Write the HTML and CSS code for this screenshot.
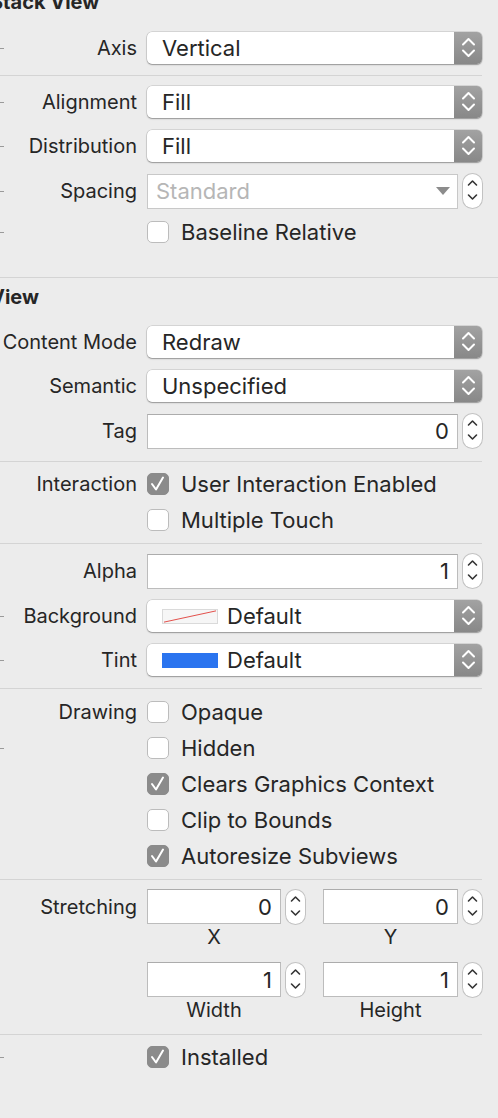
FILE: index.html
```html
<!DOCTYPE html>
<html lang="en">
<head>
    <meta charset="UTF-8">
    <meta name="viewport" content="width=device-width, initial-scale=1.0">
    <title>Attributes Inspector</title>
    <link rel="stylesheet" href="styles.css">
</head>
<body>
    <div class="inspector">
        <!-- Stack View -->
        <h2 class="group-title first">Stack View</h2>

        <div class="row row-popup">
            <span class="label mark">Axis</span>
            <div class="popup">
                <span class="popup-value">Vertical</span>
                <span class="popup-arrows"><svg width="28" height="32" viewBox="0 0 28 32"><path d="M9 12.5 L14.5 7 L20 12.5 M9 18.5 L14.5 24 L20 18.5" fill="none" stroke="#fff" stroke-width="2" stroke-linecap="round" stroke-linejoin="round"/></svg></span>
            </div>
        </div>

        <hr class="sep sep-a">

        <div class="row row-popup">
            <span class="label mark">Alignment</span>
            <div class="popup">
                <span class="popup-value">Fill</span>
                <span class="popup-arrows"><svg width="28" height="32" viewBox="0 0 28 32"><path d="M9 12.5 L14.5 7 L20 12.5 M9 18.5 L14.5 24 L20 18.5" fill="none" stroke="#fff" stroke-width="2" stroke-linecap="round" stroke-linejoin="round"/></svg></span>
            </div>
        </div>

        <div class="row row-popup">
            <span class="label mark">Distribution</span>
            <div class="popup">
                <span class="popup-value">Fill</span>
                <span class="popup-arrows"><svg width="28" height="32" viewBox="0 0 28 32"><path d="M9 12.5 L14.5 7 L20 12.5 M9 18.5 L14.5 24 L20 18.5" fill="none" stroke="#fff" stroke-width="2" stroke-linecap="round" stroke-linejoin="round"/></svg></span>
            </div>
        </div>

        <div class="row row-field">
            <span class="label mark">Spacing</span>
            <div class="field-pair">
                <div class="combo">
                    <span class="placeholder">Standard</span>
                    <svg width="14" height="8" viewBox="0 0 14 8"><path d="M0 0 H14 L7 8 Z" fill="#8c8c8c"/></svg>
                </div>
                <span class="stepper"><svg width="19" height="34" viewBox="0 0 19 34"><path d="M5.5 12 L9.5 8 L13.5 12 M5.5 22 L9.5 26 L13.5 22" fill="none" stroke="#333" stroke-width="1.6" stroke-linecap="round" stroke-linejoin="round"/></svg></span>
            </div>
        </div>

        <div class="row row-check">
            <span class="label mark"></span>
            <label class="check"><span class="box"></span>Baseline Relative</label>
        </div>

        <hr class="sep sep-full">

        <!-- View -->
        <h2 class="group-title">View</h2>

        <div class="row row-popup">
            <span class="label">Content Mode</span>
            <div class="popup">
                <span class="popup-value">Redraw</span>
                <span class="popup-arrows"><svg width="28" height="32" viewBox="0 0 28 32"><path d="M9 12.5 L14.5 7 L20 12.5 M9 18.5 L14.5 24 L20 18.5" fill="none" stroke="#fff" stroke-width="2" stroke-linecap="round" stroke-linejoin="round"/></svg></span>
            </div>
        </div>

        <div class="row row-popup">
            <span class="label">Semantic</span>
            <div class="popup">
                <span class="popup-value">Unspecified</span>
                <span class="popup-arrows"><svg width="28" height="32" viewBox="0 0 28 32"><path d="M9 12.5 L14.5 7 L20 12.5 M9 18.5 L14.5 24 L20 18.5" fill="none" stroke="#fff" stroke-width="2" stroke-linecap="round" stroke-linejoin="round"/></svg></span>
            </div>
        </div>

        <div class="row row-field">
            <span class="label">Tag</span>
            <div class="field-pair">
                <span class="field">0</span>
                <span class="stepper"><svg width="19" height="34" viewBox="0 0 19 34"><path d="M5.5 12 L9.5 8 L13.5 12 M5.5 22 L9.5 26 L13.5 22" fill="none" stroke="#333" stroke-width="1.6" stroke-linecap="round" stroke-linejoin="round"/></svg></span>
            </div>
        </div>

        <hr class="sep sep-b">

        <div class="row row-check">
            <span class="label">Interaction</span>
            <label class="check on"><span class="box"><svg width="22" height="22" viewBox="0 0 22 22"><path d="M5 11 L9 16.5 L16 4.5" fill="none" stroke="#fff" stroke-width="2" stroke-linecap="round" stroke-linejoin="round"/></svg></span>User Interaction Enabled</label>
        </div>

        <div class="row row-check">
            <span class="label"></span>
            <label class="check"><span class="box"></span>Multiple Touch</label>
        </div>

        <hr class="sep sep-c">

        <div class="row row-field">
            <span class="label">Alpha</span>
            <div class="field-pair">
                <span class="field">1</span>
                <span class="stepper"><svg width="19" height="34" viewBox="0 0 19 34"><path d="M5.5 12 L9.5 8 L13.5 12 M5.5 22 L9.5 26 L13.5 22" fill="none" stroke="#333" stroke-width="1.6" stroke-linecap="round" stroke-linejoin="round"/></svg></span>
            </div>
        </div>

        <div class="row row-popup">
            <span class="label mark">Background</span>
            <div class="popup">
                <span class="popup-value"><span class="swatch swatch-clear"><svg width="56" height="15" viewBox="0 0 56 15" preserveAspectRatio="none"><path d="M1 14 L55 1" stroke="#e0413b" stroke-width="1"/></svg></span>Default</span>
                <span class="popup-arrows"><svg width="28" height="32" viewBox="0 0 28 32"><path d="M9 12.5 L14.5 7 L20 12.5 M9 18.5 L14.5 24 L20 18.5" fill="none" stroke="#fff" stroke-width="2" stroke-linecap="round" stroke-linejoin="round"/></svg></span>
            </div>
        </div>

        <div class="row row-popup">
            <span class="label mark">Tint</span>
            <div class="popup">
                <span class="popup-value"><span class="swatch swatch-blue"></span>Default</span>
                <span class="popup-arrows"><svg width="28" height="32" viewBox="0 0 28 32"><path d="M9 12.5 L14.5 7 L20 12.5 M9 18.5 L14.5 24 L20 18.5" fill="none" stroke="#fff" stroke-width="2" stroke-linecap="round" stroke-linejoin="round"/></svg></span>
            </div>
        </div>

        <hr class="sep sep-d">

        <div class="row row-check">
            <span class="label">Drawing</span>
            <label class="check"><span class="box"></span>Opaque</label>
        </div>
        <div class="row row-check">
            <span class="label mark"></span>
            <label class="check"><span class="box"></span>Hidden</label>
        </div>
        <div class="row row-check">
            <span class="label"></span>
            <label class="check on"><span class="box"><svg width="22" height="22" viewBox="0 0 22 22"><path d="M5 11 L9 16.5 L16 4.5" fill="none" stroke="#fff" stroke-width="2" stroke-linecap="round" stroke-linejoin="round"/></svg></span>Clears Graphics Context</label>
        </div>
        <div class="row row-check">
            <span class="label"></span>
            <label class="check"><span class="box"></span>Clip to Bounds</label>
        </div>
        <div class="row row-check">
            <span class="label"></span>
            <label class="check on"><span class="box"><svg width="22" height="22" viewBox="0 0 22 22"><path d="M5 11 L9 16.5 L16 4.5" fill="none" stroke="#fff" stroke-width="2" stroke-linecap="round" stroke-linejoin="round"/></svg></span>Autoresize Subviews</label>
        </div>

        <hr class="sep sep-e">

        <div class="row row-stretch">
            <span class="label">Stretching</span>
            <div class="stretch-grid">
                <div class="num">
                    <div class="field-pair">
                        <span class="field">0</span>
                        <span class="stepper"><svg width="19" height="34" viewBox="0 0 19 34"><path d="M5.5 12 L9.5 8 L13.5 12 M5.5 22 L9.5 26 L13.5 22" fill="none" stroke="#333" stroke-width="1.6" stroke-linecap="round" stroke-linejoin="round"/></svg></span>
                    </div>
                    <span class="caption">X</span>
                </div>
                <div class="num">
                    <div class="field-pair">
                        <span class="field">0</span>
                        <span class="stepper"><svg width="19" height="34" viewBox="0 0 19 34"><path d="M5.5 12 L9.5 8 L13.5 12 M5.5 22 L9.5 26 L13.5 22" fill="none" stroke="#333" stroke-width="1.6" stroke-linecap="round" stroke-linejoin="round"/></svg></span>
                    </div>
                    <span class="caption">Y</span>
                </div>
                <div class="num">
                    <div class="field-pair">
                        <span class="field">1</span>
                        <span class="stepper"><svg width="19" height="34" viewBox="0 0 19 34"><path d="M5.5 12 L9.5 8 L13.5 12 M5.5 22 L9.5 26 L13.5 22" fill="none" stroke="#333" stroke-width="1.6" stroke-linecap="round" stroke-linejoin="round"/></svg></span>
                    </div>
                    <span class="caption">Width</span>
                </div>
                <div class="num">
                    <div class="field-pair">
                        <span class="field">1</span>
                        <span class="stepper"><svg width="19" height="34" viewBox="0 0 19 34"><path d="M5.5 12 L9.5 8 L13.5 12 M5.5 22 L9.5 26 L13.5 22" fill="none" stroke="#333" stroke-width="1.6" stroke-linecap="round" stroke-linejoin="round"/></svg></span>
                    </div>
                    <span class="caption">Height</span>
                </div>
            </div>
        </div>

        <hr class="sep sep-f">

        <div class="row row-check">
            <span class="label mark"></span>
            <label class="check on"><span class="box"><svg width="22" height="22" viewBox="0 0 22 22"><path d="M5 11 L9 16.5 L16 4.5" fill="none" stroke="#fff" stroke-width="2" stroke-linecap="round" stroke-linejoin="round"/></svg></span>Installed</label>
        </div>
    </div>
</body>
</html>
```

FILE: styles.css
```css
body {
    margin: 0;
    background-color: #ececec;
    font-family: Inter, "Noto Sans", sans-serif;
    font-size: 20px;
    color: #262626;
    overflow: hidden;
}
.inspector {
    width: 498px;
}
.group-title {
    margin: 0 0 0 -10px;
    font-size: 20px;
    font-weight: bold;
    line-height: 24px;
    height: 35px;
    padding-top: 7px;
}
.group-title.first {
    margin-top: -10px;
    height: 36px;
    padding-top: 0;
}
.row {
    display: grid;
    grid-template-columns: 137px 335px;
    column-gap: 10px;
    align-items: center;
}
.row-popup { height: 44px; }
.row-field { height: 46px; }
.row-check { height: 36px; }
.label {
    text-align: right;
    white-space: nowrap;
    align-self: stretch;
    display: flex;
    align-items: center;
    justify-content: flex-end;
}
.mark {
    background: linear-gradient(#9a9a9a, #9a9a9a) no-repeat 0 50% / 4px 1px;
}

/* separators */
.sep {
    border: none;
    height: 1px;
    background: #d4d4d4;
    width: 482px;
    margin: 0;
}
.sep-full { width: 498px; margin: 27px 0 0; }
.sep-a { margin: 5px 0 4px; }
.sep-b { margin: 7px 0 4px; }
.sep-c { margin: 5px 0 4px; }
.sep-d { margin: 6px 0 5px; }
.sep-e { margin: 5px 0 9px; }
.sep-f { margin: 13px 0 4px; }

/* popup buttons */
.popup {
    height: 32px;
    display: flex;
    align-items: center;
    background: white;
    border-radius: 5px;
    box-shadow: 0 0 0 0.5px rgba(0, 0, 0, 0.18), 0 1px 1.5px rgba(0, 0, 0, 0.3);
    overflow: hidden;
}
.popup-value {
    flex: 1;
    padding-left: 15px;
    display: flex;
    align-items: center;
    font-size: 22px;
}
.popup-arrows {
    width: 28px;
    height: 32px;
    background: linear-gradient(#a2a2a2, #888);
    display: block;
}
.popup-arrows svg { display: block; }
.swatch {
    width: 56px;
    height: 15px;
    margin-right: 9px;
    box-sizing: border-box;
    display: block;
}
.swatch svg { display: block; }
.swatch-clear {
    background: #f6f6f6;
    border: 1px solid #dadada;
}
.swatch-clear svg { width: 54px; height: 13px; }
.swatch-blue { background: #2a74ef; }

/* text fields with steppers */
.field-pair {
    display: flex;
    align-items: center;
    gap: 5px;
}
.field, .combo {
    flex: 1;
    height: 35px;
    box-sizing: border-box;
    background: white;
    border: 1px solid #bcbcbc;
    border-top-color: #acacac;
    display: flex;
    align-items: center;
    font-size: 22px;
}
.field {
    justify-content: flex-end;
    padding-right: 8px;
}
.combo {
    justify-content: space-between;
    padding: 0 7px 0 8px;
    border-color: #c8c8c8;
}
.placeholder { color: #b6b6b6; }
.stepper {
    width: 19px;
    height: 34px;
    box-sizing: border-box;
    background: white;
    border-radius: 10px;
    box-shadow: 0 0 0 1px #c2c2c2;
    display: block;
}
.stepper svg { display: block; margin-top: -1px; }

/* checkboxes */
.check {
    display: flex;
    align-items: center;
    gap: 12px;
    white-space: nowrap;
    font-size: 22px;
}
.box {
    width: 22px;
    height: 22px;
    box-sizing: border-box;
    border: 1px solid #bcbcbc;
    border-radius: 5px;
    background: white;
    display: block;
}
.check.on .box {
    background: #8b8b8b;
    border-color: #8b8b8b;
}
.box svg { display: block; margin: -1px; }

/* stretching */
.row-stretch { align-items: start; }
.row-stretch .label { height: 35px; align-self: start; }
.stretch-grid {
    display: grid;
    grid-template-columns: 158px 159px;
    column-gap: 18px;
    row-gap: 14px;
}
.num .field-pair { width: 100%; }
.caption {
    display: block;
    width: calc(100% - 24px);
    text-align: center;
    line-height: 22px;
    margin-top: 2px;
}
```
